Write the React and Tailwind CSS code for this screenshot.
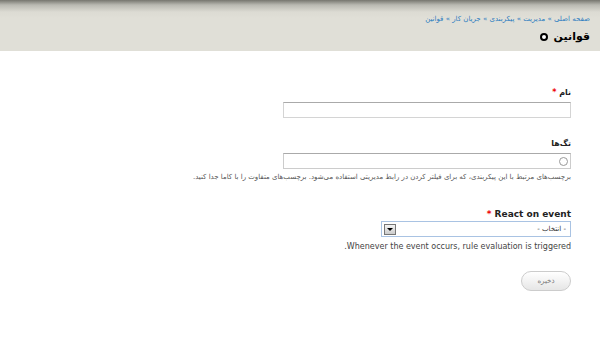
import React from 'react';

export default function App() {
    return (
        <div className="w-[600px] h-[338px] bg-white overflow-hidden" dir="rtl" style={{ fontFamily: '"DejaVu Sans", sans-serif' }}>
            {/* Header */}
            <div className="h-[51px] bg-[linear-gradient(#76766f_0px,#b9b9b2_5px,#dcdbd3_12px,#e0dfd7_18px)] pr-[10px] pt-[14px]">
                <div className="text-[7px] leading-[10px] text-[#2a7bc0]">
                    <a>صفحه اصلی</a> » <a>مدیریت</a> » <a>پیکربندی</a> » <a>جریان کار</a> » <a>قوانین</a>
                </div>
                <div className="flex items-center gap-[6px] mt-[6px]">
                    <h1 className="text-[11px] font-bold text-black leading-[14px]">قوانین</h1>
                    <span className="w-[8px] h-[8px] rounded-full border-[2px] border-black bg-white"></span>
                </div>
            </div>

            {/* Form */}
            <div className="pr-[29px] pt-[37px]">
                <div>
                    <label className="block text-[8px] font-bold text-[#222] leading-[10px]">
                        نام <span className="text-[#e00]">*</span>
                    </label>
                    <input className="mt-[3px] w-[288px] h-[16px] border border-[#d4d4d4] border-t-[#aaa] bg-white" />
                </div>

                <div className="mt-[17px]">
                    <label className="block text-[8px] font-bold text-[#222] leading-[10px]">تگ‌ها</label>
                    <div className="relative mt-[4px] w-[288px] h-[16px] border border-[#ccc] border-t-[#aaa] bg-white">
                        <span className="absolute right-[2px] top-[3px] w-[9px] h-[9px] rounded-full border border-[#999]"></span>
                    </div>
                    <p className="mt-[3px] text-[7px] text-[#555] leading-[10px]">
                        برچسب‌های مرتبط با این پیکربندی، که برای فیلتر کردن در رابط مدیریتی استفاده می‌شود. برچسب‌های متفاوت را با کاما جدا کنید.
                    </p>
                </div>

                <div className="mt-[26px]">
                    <label className="block text-[9px] font-bold text-[#222] leading-[12px]" dir="ltr" style={{ textAlign: 'right' }}>
                        <span className="text-[#e00]">*</span> React on event
                    </label>
                    <div className="mt-[1px] flex items-center justify-between w-[190px] h-[16px] border border-[#a9c3e3] bg-white pr-[4px] pl-[2px]">
                        <span className="text-[7px] text-[#333]">- انتخاب -</span>
                        <span className="w-[12px] h-[11px] border border-[#777] bg-[linear-gradient(#f4f4f4,#ccc)] flex items-center justify-center">
                            <span className="w-0 h-0 border-l-[3px] border-r-[3px] border-t-[3px] border-l-transparent border-r-transparent border-t-black"></span>
                        </span>
                    </div>
                    <p className="mt-[4px] text-[8px] text-[#444] leading-[11px]">
                        Whenever the event occurs, rule evaluation is triggered.
                    </p>
                </div>

                <button className="mt-[19px] w-[50px] h-[20px] rounded-full border border-[#ccc] bg-[linear-gradient(#fff,#e6e6e6)] text-[7px] text-[#777]">
                    ذخیره
                </button>
            </div>
        </div>
    );
}
